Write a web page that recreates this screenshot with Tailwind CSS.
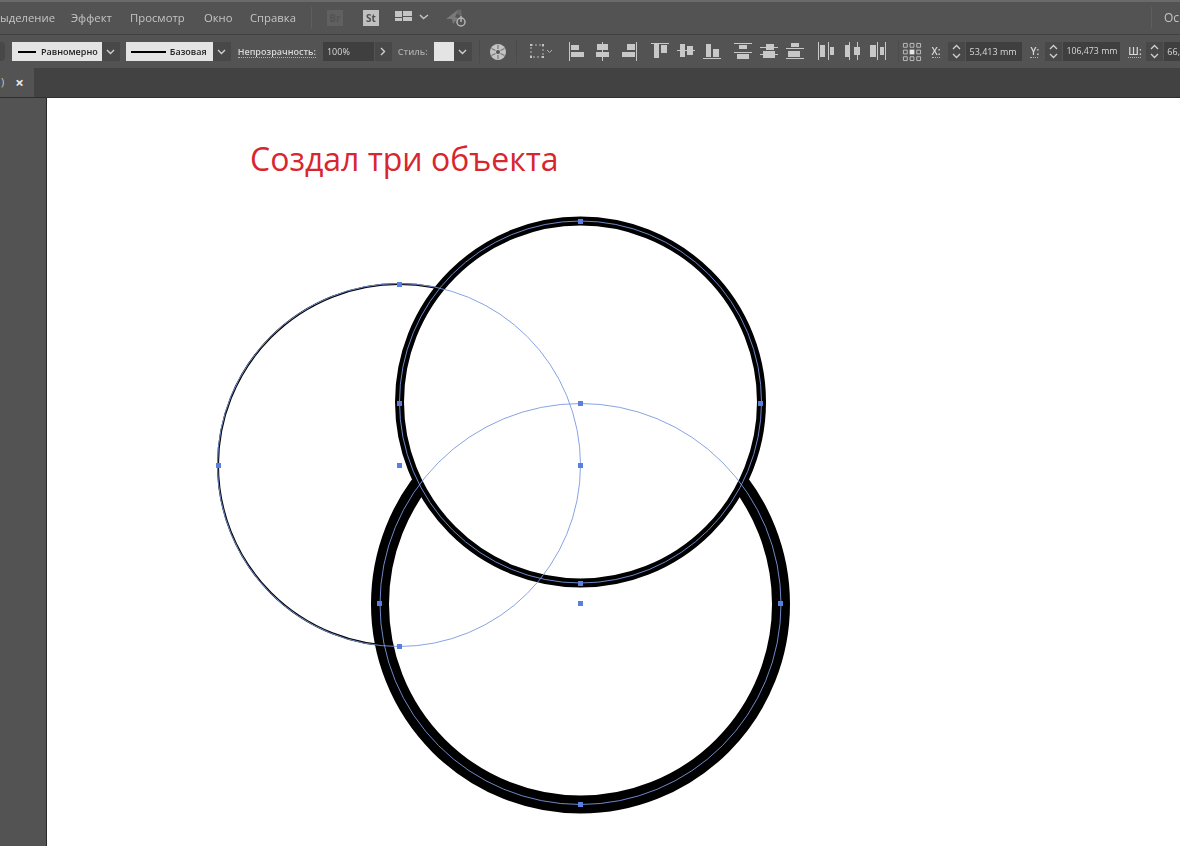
<!DOCTYPE html>
<html lang="ru">
<head>
    <meta charset="UTF-8">
    <title>Создал три объекта</title>
    <script src="https://cdn.jsdelivr.net/npm/@tailwindcss/browser@4"></script>
</head>
<body class="w-[1180px] h-[846px] overflow-hidden flex flex-col bg-[#535353] font-['Open_Sans',sans-serif] text-[#c4c4c4]">

    <!-- menu bar -->
    <header class="h-[35px] shrink-0 flex items-center bg-[#535353] border-t-2 border-b border-t-[#6a6a6a] border-b-[#414141] text-[11.3px] whitespace-nowrap overflow-hidden blur-[0.3px]">
        <nav class="flex items-center">
            <span class="w-[71px]">ыделение</span>
            <span class="w-[59px]">Эффект</span>
            <span class="w-[74px]">Просмотр</span>
            <span class="w-[46px]">Окно</span>
            <span class="w-[60px]">Справка</span>
        </nav>
        <div class="w-px h-[22px] bg-[#5e5e5e] ml-[1px]"></div>
        <div class="w-[16px] h-[16px] ml-[15px] bg-[#606060] text-[#535353] text-[10px] font-bold flex items-center justify-center">Br</div>
        <div class="w-[16px] h-[16px] ml-[20px] bg-[#c0c0c0] text-[#505050] text-[10px] font-bold flex items-center justify-center">St</div>
        <svg class="ml-[16px]" width="36" height="16" viewBox="0 0 36 16" fill="none">
            <path d="M0 1h7v6H0zM8 1h9v5H8zM8 7h9v4H8zM0 8h7v3H0z" fill="#c4c4c4"/>
            <path d="M25 5l3.500 3.500L33 5" stroke="#c4c4c4" stroke-width="1.500"/>
        </svg>
        <svg class="ml-[14px]" width="26" height="22" viewBox="0 0 26 22" fill="none">
            <path d="M1 12L14 2l-4 8 3 1-5 6-1-5z" fill="#7a7a7a"/>
            <path d="M11 6l5-4 1 8z" fill="#6a6a6a"/>
            <circle cx="16" cy="15" r="4" stroke="#b4b4b4" stroke-width="1.500"/>
            <path d="M16 9v6" stroke="#b4b4b4" stroke-width="1.500"/>
        </svg>
        <div class="w-px h-[22px] bg-[#5e5e5e] ml-auto"></div>
        <span class="w-[16px] ml-[12px] text-[12px]">Ос</span>
    </header>

    <!-- control bar -->
    <div class="h-[33px] shrink-0 flex items-center bg-[#535353] text-[9px] whitespace-nowrap overflow-hidden blur-[0.3px]">
        <div class="w-[5px] h-[19px] bg-[#484848] rounded-r-sm"></div>
        <div class="w-[90px] h-[19px] ml-[7px] bg-[#e4e4e4] text-[#222] font-semibold flex items-center pl-[6px] gap-[5px]">
            <span class="w-[18px] h-[2px] bg-black"></span>Равномерно
        </div>
        <div class="w-[18px] h-[19px] bg-[#484848] flex items-center justify-center">
            <svg width="9" height="6" viewBox="0 0 9 6" fill="none"><path d="M1 1l3.500 3.500L8 1" stroke="#d0d0d0" stroke-width="1.400"/></svg>
        </div>
        <div class="w-[87px] h-[19px] ml-[6px] bg-[#e4e4e4] text-[#222] font-semibold flex items-center pl-[5px] gap-[4px]">
            <span class="w-[35px] h-[2px] bg-black"></span>Базовая
        </div>
        <div class="w-[18px] h-[19px] bg-[#484848] flex items-center justify-center">
            <svg width="9" height="6" viewBox="0 0 9 6" fill="none"><path d="M1 1l3.500 3.500L8 1" stroke="#d0d0d0" stroke-width="1.400"/></svg>
        </div>
        <span class="ml-[7px] font-semibold text-[#d8d8d8] border-b border-dotted border-[#b0b0b0] leading-[11px]">Непрозрачность:</span>
        <div class="w-[51px] h-[19px] ml-[7px] bg-[#3f3f3f] text-[#d8d8d8] flex items-center pl-[4px]">100%</div>
        <div class="w-[17px] h-[19px] ml-px bg-[#484848] flex items-center justify-center">
            <svg width="6" height="9" viewBox="0 0 6 9" fill="none"><path d="M1 1l3.500 3.500L1 8" stroke="#d0d0d0" stroke-width="1.400"/></svg>
        </div>
        <span class="ml-[6px] font-semibold text-[#a8a8a8]">Стиль:</span>
        <div class="w-[20px] h-[19px] ml-[6px] bg-[#e4e4e4]"></div>
        <div class="w-[18px] h-[19px] bg-[#484848] flex items-center justify-center">
            <svg width="9" height="6" viewBox="0 0 9 6" fill="none"><path d="M1 1l3.500 3.500L8 1" stroke="#d0d0d0" stroke-width="1.400"/></svg>
        </div>
        <div class="w-px h-[23px] ml-[7px] bg-[#4b4b4b]"></div>
        <svg class="ml-[9px] shrink-0" width="18" height="18" viewBox="0 0 18 18" fill="none">
            <circle cx="9" cy="9" r="8" fill="#c4c4c4"/>
            <circle cx="9" cy="9" r="2" fill="#555"/>
            <path d="M9 2v4M9 12v4M2.500 5.500l4 2M11.500 10.500l4 2M2.500 12.500l4-2M11.500 7.500l4-2" stroke="#777" stroke-width="1.200"/>
        </svg>
        <div class="w-px h-[23px] ml-[9px] bg-[#4b4b4b]"></div>
        <svg class="ml-[12px] shrink-0" width="26" height="18" viewBox="0 0 26 18" fill="none">
            <rect x="2" y="2" width="12" height="12" stroke="#b8b8b8" stroke-dasharray="2 2"/>
            <path d="M1 1h2v2H1zM13 1h2v2h-2zM1 13h2v2H1zM13 13h2v2h-2z" fill="#c4c4c4"/>
            <path d="M18 7l2.500 2.500L23 7" stroke="#b0b0b0"/>
        </svg>
        <!-- align and distribute -->
        <svg class="ml-[13px] shrink-0" width="322" height="33" viewBox="568 35 322 33" fill="#c8c8c8">
            <path d="M569 42h1v19h-1zM571 45h8v5h-8zM571 52h13v5h-13z"/>
            <path d="M602 42h1v19h-1zM597 44h11v6h-11zM596 52h13v5h-13z"/>
            <path d="M636 42h1v19h-1zM627 44h8v6h-8zM622 52h13v5h-13z"/>
            <path d="M651 43h18v1h-18zM654 44h5v14h-5zM661 45h6v8h-6z"/>
            <path d="M677 50h18v1h-18zM680 44h5v13h-5zM687 46h6v9h-6z"/>
            <path d="M703 58h18v1h-18zM706 44h5v13h-5zM713 49h6v8h-6z"/>
            <path d="M734 43h18v1h-18zM739 45h8v4h-8zM734 52h18v1h-18zM737 54h12v5h-12z"/>
            <path d="M760 47h18v1h-18zM766 44h8v6h-8zM760 54h18v1h-18zM763 51h12v7h-12z"/>
            <path d="M786 48h18v1h-18zM791 43h8v4h-8zM786 58h18v1h-18zM788 51h12v6h-12z"/>
            <path d="M818 42h1v18h-1zM820 45h5v12h-5zM828 42h1v18h-1zM830 47h4v8h-4z"/>
            <path d="M849 42h1v18h-1zM845 45h5v12h-5zM857 42h1v18h-1zM854 47h6v8h-6z"/>
            <path d="M877 42h1v18h-1zM870 45h6v12h-6zM885 42h1v18h-1zM880 47h4v8h-4z"/>
        </svg>
        <div class="w-px h-[23px] ml-[8px] bg-[#4b4b4b]"></div>
        <svg class="ml-[3px] shrink-0" width="20" height="20" viewBox="0 0 21 21" fill="none" stroke="#c0c0c0">
            <path d="M1.500 1.500h4v4h-4zM8.500 1.500h4v4h-4zM15.500 1.500h4v4h-4zM1.500 8.500h4v4h-4zM15.500 8.500h4v4h-4zM1.500 15.500h4v4h-4zM8.500 15.500h4v4h-4zM15.500 15.500h4v4h-4z"/>
            <rect x="8" y="8" width="5" height="5" fill="#e8e8e8" stroke="none"/>
        </svg>
        <span class="w-[8px] ml-[10px] text-[10px] font-semibold text-[#d8d8d8] border-b border-dotted border-[#b0b0b0] leading-[11px]">X:</span>
        <div class="w-[17px] h-[19px] ml-[8px] bg-[#484848] flex items-center justify-center">
            <svg width="9" height="15" viewBox="0 0 9 15" fill="none" stroke="#d0d0d0" stroke-width="1.300"><path d="M1 5l3.500-3.500L8 5M1 10l3.500 3.500L8 10"/></svg>
        </div>
        <div class="w-[57px] h-[19px] ml-px bg-[#3f3f3f] text-[#d8d8d8] text-[9px] flex items-center pl-[4px]">53,413 mm</div>
        <span class="w-[8px] ml-[8px] text-[10px] font-semibold text-[#d8d8d8] border-b border-dotted border-[#b0b0b0] leading-[11px]">Y:</span>
        <div class="w-[17px] h-[19px] ml-[7px] bg-[#484848] flex items-center justify-center">
            <svg width="9" height="15" viewBox="0 0 9 15" fill="none" stroke="#d0d0d0" stroke-width="1.300"><path d="M1 5l3.500-3.500L8 5M1 10l3.500 3.500L8 10"/></svg>
        </div>
        <div class="w-[57px] h-[19px] ml-px bg-[#3f3f3f] text-[#d8d8d8] text-[8.800px] flex items-center pl-[3px]">106,473 mm</div>
        <span class="w-[13px] ml-[8px] text-[10px] font-semibold text-[#d8d8d8] border-b border-dotted border-[#b0b0b0] leading-[11px]">Ш:</span>
        <div class="w-[17px] h-[19px] ml-[5px] shrink-0 bg-[#484848] flex items-center justify-center">
            <svg width="9" height="15" viewBox="0 0 9 15" fill="none" stroke="#d0d0d0" stroke-width="1.300"><path d="M1 5l3.500-3.500L8 5M1 10l3.500 3.500L8 10"/></svg>
        </div>
        <div class="flex-1 h-[19px] ml-px bg-[#3f3f3f] text-[#d8d8d8] text-[9px] flex items-center pl-[3px]">66,</div>
    </div>

    <!-- document tabs -->
    <div class="h-[30px] shrink-0 flex bg-[#424242] border-b border-[#2e2e2e]">
        <div class="w-[34px] bg-[#535353] flex items-center text-[11px] gap-[11px]">
            <span class="pl-px">)</span>
            <span class="font-bold text-[15px] leading-none text-[#e8e8e8]">×</span>
        </div>
    </div>

    <div class="flex-1 flex min-h-0">
        <aside class="w-[47px] shrink-0 bg-[#535353] border-r border-[#2a2a2a]"></aside>

        <!-- artboard -->
        <main class="relative flex-1 bg-white">
            <h1 class="absolute left-[203px] top-[38px] text-[32px] leading-[46px] text-[#d8262f] whitespace-nowrap font-['Open_Sans',sans-serif]">Создал три объекта</h1>
            <svg class="absolute left-0 top-0" width="1133" height="749" viewBox="47 98 1133 749" fill="none">
                <circle cx="399" cy="465" r="181" fill="#fff" stroke="#000" stroke-width="2"/>
                <circle cx="580.500" cy="604" r="200.500" fill="#fff" stroke="#000" stroke-width="18"/>
                <circle cx="580.500" cy="402" r="181" fill="#fff" stroke="#000" stroke-width="9"/>
                <g stroke="#7b99de" stroke-width="0.900">
                    <circle cx="399" cy="465" r="181.500"/>
                    <circle cx="580.500" cy="604" r="200.500"/>
                    <circle cx="580.500" cy="402" r="181"/>
                </g>
                <path fill="#5b7fe0" d="M397 282h5v5h-5zM578 219h5v5h-5zM397 401h5v5h-5zM758 401h5v5h-5zM578 401h5v5h-5zM216 463h5v5h-5zM397 463h5v5h-5zM578 463h5v5h-5zM578 581h5v5h-5zM578 601h5v5h-5zM377 601h5v5h-5zM778 601h5v5h-5zM397 644h5v5h-5zM578 802h5v5h-5z"/>
            </svg>
        </main>
    </div>
</body>
</html>
